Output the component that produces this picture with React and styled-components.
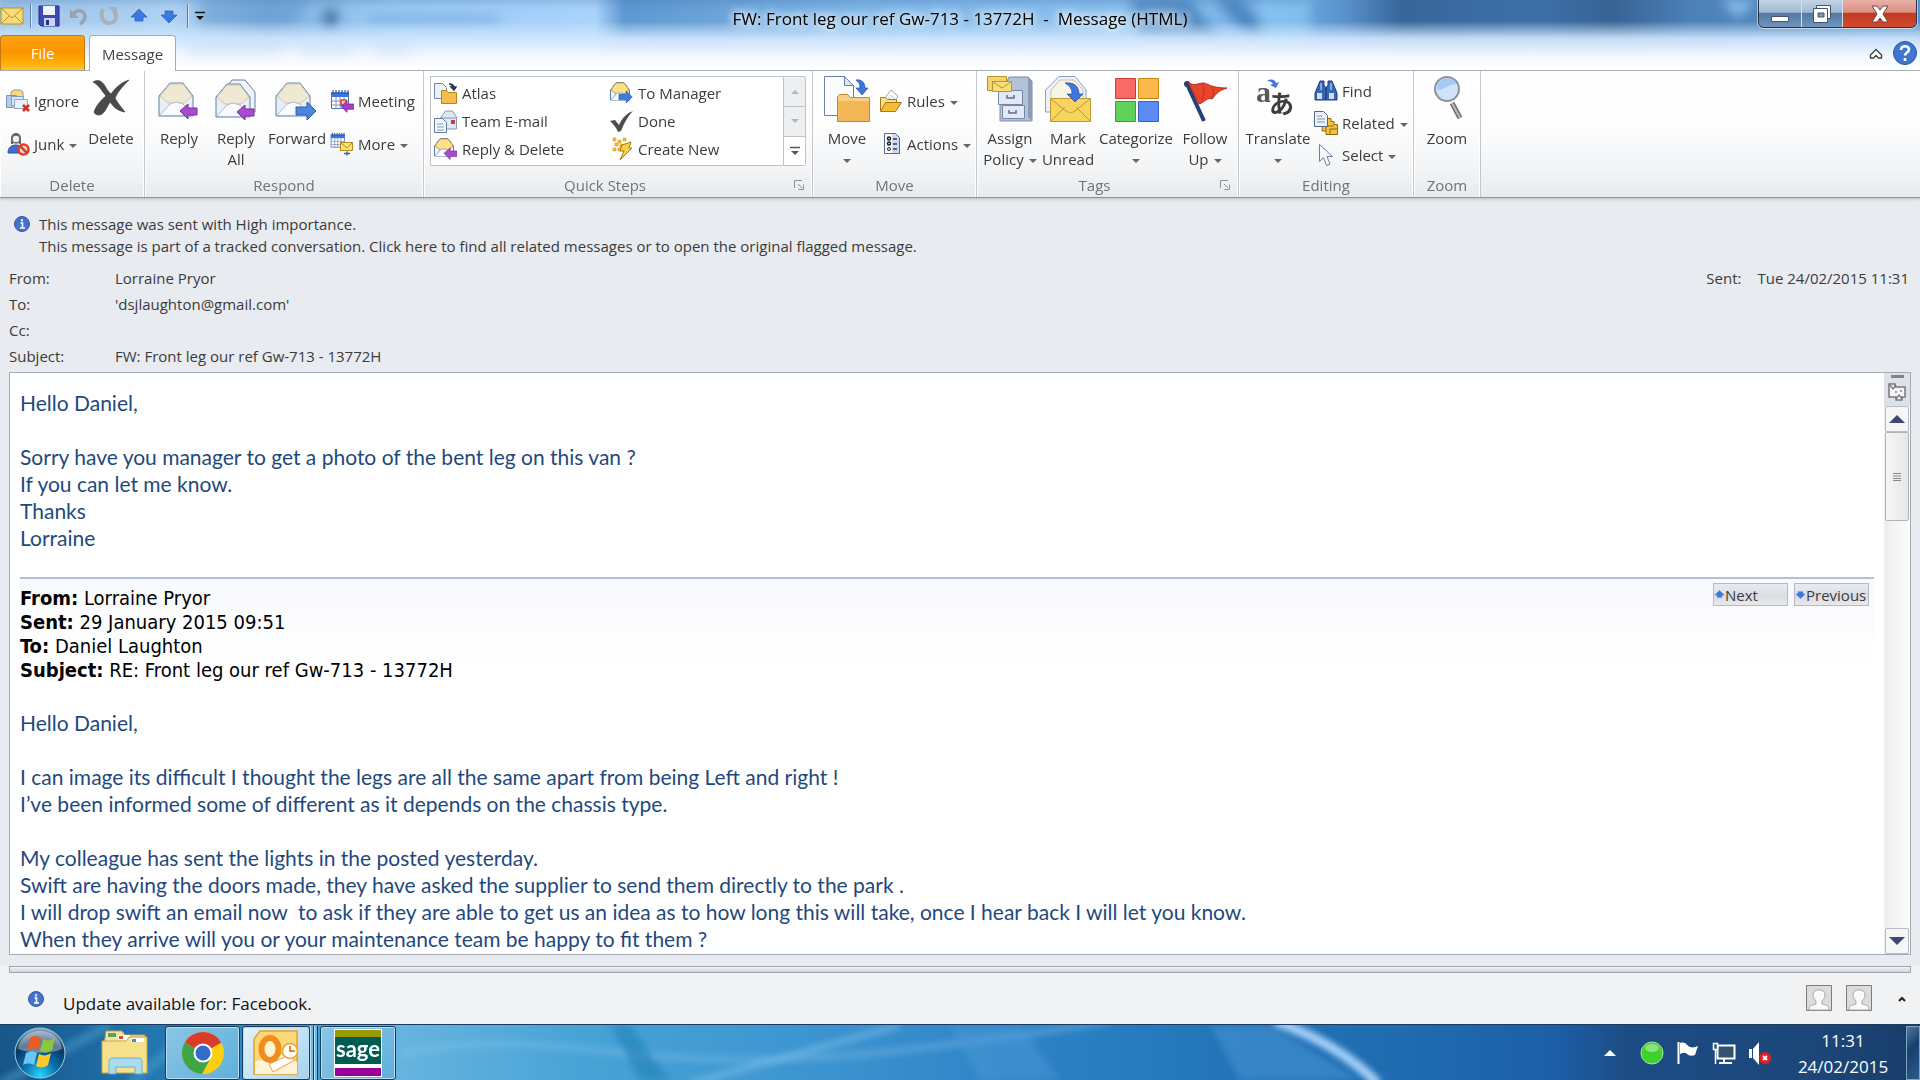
import React from "react";
import styled, { createGlobalStyle } from "styled-components";

const GlobalStyle = createGlobalStyle`
  *, *::before, *::after { box-sizing: border-box; }
  html, body { margin: 0; padding: 0; }
  body {
    font-family: "Open Sans", "Noto Sans", sans-serif;
    font-size: 15px;
    color: #3b3b3b;
    background: #e8ebf0;
  }
  button { font: inherit; color: inherit; border: 0; padding: 0; background: none; cursor: default; }
  svg { display: block; flex: none; }
  p, dl, dd, h1, h2 { margin: 0; font-weight: 400; }
`;

/* ---------- window frame ---------- */

const Window = styled.div`
  display: flex;
  flex-direction: column;
  height: 100vh;
  min-height: 900px;
  overflow: hidden;
`;

const Glass = styled.header`
  position: relative;
  isolation: isolate;
  flex: none;
  border-bottom: 1px solid #a7acb3;
`;

const GlassArt = styled.svg`
  position: absolute;
  inset: 0;
  width: 100%;
  height: 100%;
  z-index: -1;
`;

const TitleBar = styled.div`
  display: grid;
  grid-template-columns: 1fr auto 1fr;
  align-items: start;
  height: 35px;
`;

const QuickAccess = styled.div`
  display: flex;
  align-items: center;
  gap: 6px;
  height: 31px;
`;

const QuickButton = styled.button`
  display: grid;
  place-items: center;
  width: ${(p) => (p.$slim ? 12 : 24)}px;
  height: 26px;
`;

const QuickDivider = styled.span`
  width: 1px;
  height: 24px;
  background: #5c7ba3;
  box-shadow: 1px 0 #d8e8fa;
`;

const Caption = styled.h1`
  font-size: 17px;
  line-height: 38px;
  color: #000;
  white-space: nowrap;
  padding: 0 12px;
  text-shadow: 0 0 8px #fff, 0 0 8px #fff, 0 0 14px #e8f4ff;
`;

const CaptionButtons = styled.div`
  justify-self: end;
  display: flex;
  height: 28px;
  margin-right: 3px;
  border: 1px solid #25364c;
  border-top: 0;
  border-radius: 0 0 6px 6px;
  box-shadow: 0 0 0 1px #ffffff80;
  overflow: hidden;
`;

const CaptionButton = styled.button`
  display: grid;
  place-items: center;
  width: ${(p) => (p.$close ? 73 : p.$narrow ? 41 : 43)}px;
  border-right: 1px solid #cfe0f3;
  background: ${(p) =>
    p.$close
      ? "linear-gradient(#e9b0a6 0, #dd8f84 45%, #c33a22 50%, #d2492f 100%)"
      : "linear-gradient(#c3d3e5 0, #a3bad3 45%, #54789f 50%, #6f95bf 100%)"};
  &:last-child { border-right: 0; }
`;

const TabStrip = styled.nav`
  display: flex;
  align-items: flex-end;
  height: 35px;
`;

const Tab = styled.button`
  width: ${(p) => (p.$file ? 85 : 87)}px;
  height: ${(p) => (p.$file ? 35 : 36)}px;
  margin: ${(p) => (p.$file ? "0 4px 0 0" : "0 0 -1px")};
  border: 1px solid ${(p) => (p.$file ? "#c9780d" : "#a7acb3")};
  border-bottom: 0;
  border-radius: 4px 4px 0 0;
  color: ${(p) => (p.$file ? "#fff" : "#444")};
  background: ${(p) =>
    p.$file ? "linear-gradient(#f9a413, #fb9400 45%, #ffa600 70%, #ffc425)" : "#fff"};
`;

const StripTools = styled.div`
  display: flex;
  align-items: center;
  gap: 10px;
  height: 35px;
  margin-left: auto;
  padding-right: 3px;
`;

/* ---------- ribbon ---------- */

const Ribbon = styled.section`
  display: flex;
  flex: none;
  height: 127px;
  background: linear-gradient(#fff 0, #fdfdfe 45%, #f2f4f5 78%, #e8ebee 100%);
  border-bottom: 1px solid #8c9298;
  box-shadow: 0 2px 2px #c9cdd2;
  position: relative;
`;

const GroupBox = styled.div`
  display: flex;
  flex-direction: column;
  border-right: 1px solid #c3c7cb;
  box-shadow: inset -1px 0 #fff, inset 1px 0 #fff;
  padding-left: ${(p) => p.$inset}px;
  width: ${(p) => p.$width}px;
`;

const GroupBody = styled.div`
  display: flex;
  flex: 1;
`;

const GroupFooter = styled.div`
  display: flex;
  align-items: center;
  height: 24px;
  margin-left: -${(p) => p.$inset}px;
  padding-right: 8px;
  color: #6e747c;
  line-height: 22px;
  span {
    flex: 1;
    text-align: center;
    padding: ${(p) => (p.$launcher ? "0 8px 0 0" : "0 0 0 8px")};
  }
`;

const BigButton = styled.button`
  display: flex;
  flex-direction: column;
  align-items: center;
  gap: 6px;
  width: ${(p) => p.$width}px;
  padding-top: 5px;
  line-height: 21px;
  white-space: nowrap;
`;

const SmallColumn = styled.div`
  display: flex;
  flex-direction: column;
  gap: ${(p) => (p.$dense ? 8 : 19)}px;
  width: ${(p) => p.$width}px;
  padding: ${(p) => (p.$dense ? 8 : 18)}px 0 0 1px;
`;

const SmallButton = styled.button`
  display: flex;
  align-items: center;
  gap: 4px;
  height: 24px;
  white-space: nowrap;
`;

const CaretShape = styled.span`
  display: inline-block;
  width: 0;
  height: 0;
  margin-left: ${(p) => (p.$alone ? 0 : 5)}px;
  vertical-align: middle;
  border: 4px solid transparent;
  border-top-color: #666;
  border-bottom: 0;
`;

const Gallery = styled.div`
  display: flex;
  width: 376px;
  height: 90px;
  margin-top: 5px;
`;

const GalleryList = styled.div`
  flex: 1;
  display: grid;
  grid-template-columns: 176px 1fr;
  grid-auto-rows: 28px;
  padding: 2px 0 0 2px;
  border: 1px solid #c0c4c8;
  background: #fff;
`;

const GalleryItem = styled.button`
  display: flex;
  align-items: center;
  gap: 5px;
  white-space: nowrap;
`;

const GalleryScroll = styled.div`
  display: grid;
  grid-template-rows: 1fr 1fr 1fr;
  width: 22px;
  border: 1px solid #c0c4c8;
  border-left: 0;
  border-radius: 0 3px 3px 0;
  background: #eeeff0;
  button { display: grid; place-items: center; }
  button + button { border-top: 1px solid #c0c4c8; }
  button:last-child { background: #fff; }
`;

const RibbonGroup = ({ label, width, inset, launcher, children }) => (
  <GroupBox $width={width} $inset={inset}>
    <GroupBody>{children}</GroupBody>
    <GroupFooter $inset={inset} $launcher={launcher}>
      <span>{label}</span>
      {launcher && (
        <button aria-label={`${label} options`}>
          <svg width="10" height="10" viewBox="0 0 10 10" fill="none" stroke="#8b9199">
            <path d="M.5 8V.5H8M4 4l4 4M9.5 4.500V9.500H4.500" />
          </svg>
        </button>
      )}
    </GroupFooter>
  </GroupBox>
);

const Big = ({ icon, lines, caret, width }) => (
  <BigButton $width={width}>
    {icon}
    <span>
      {lines[0]}
      <br />
      {lines[1]}
      {caret && <CaretShape $alone={!lines[1]} />}
    </span>
  </BigButton>
);

const Small = ({ icon, children, caret }) => (
  <SmallButton>
    {icon}
    <span>
      {children}
      {caret && <CaretShape />}
    </span>
  </SmallButton>
);

/* ---------- icons ---------- */

const Ic = ({ s = 24, h, children, ...rest }) => (
  <svg width={s} height={h || s} viewBox={`0 0 ${s} ${h || s}`} aria-hidden="true" fill="none" {...rest}>
    {children}
  </svg>
);

const leftArrow = "M0 7l8-7v4h9v7H8v4z";
const rightArrow = "M20 9l-9-9v5H0v8h11v5z";

const OpenLetter = ({ back }) => (
  <g stroke="#5f7fa8" strokeLinejoin="round">
    {back && <path d="M11 12L20 1h13l10 12v20H12z" fill="#f0f3f8" />}
    <path d="M4 18L15 5h13l10 13v20H4z" fill="#e9eff8" />
    <path d="M5 18L15 6h13l9 12-8 7H13z" fill="#efe9d4" stroke="#cdc5a8" />
    <path d="M5 37l10-11 6-2 7 2 9 11" fill="#f8fafd" stroke="#a9bbd4" />
  </g>
);

const ReplyIcon = ({ all }) => (
  <Ic s={46}>
    <g transform={all ? "translate(-1 3)" : "translate(-1 2)"}>
      <OpenLetter back={all} />
      <path d={leftArrow} transform="translate(25 26)" fill="#a94bd0" stroke="#7d2ba4" />
    </g>
  </Ic>
);

const ForwardIcon = () => (
  <Ic s={46}>
    <g transform="translate(-2 2)">
      <OpenLetter />
      <path d={rightArrow} transform="translate(24 24)" fill="#4a86dc" stroke="#2a5cab" />
    </g>
  </Ic>
);

const DeleteIcon = () => (
  <Ic s={46}>
    <path d="M5 6c5-3 9-1 12 4 2 4 4 6 6 8C28 11 34 6 41 4c-6 6-11 11-14 18 3 6 7 10 10 14-8-1-12-6-15-10-3 5-5 10-8 12-3 2-7 1-8-2C8 30 13 24 18 20 14 15 11 9 5 6z" fill="#4a4a4a" stroke="#2f2f2f" strokeWidth=".6" />
  </Ic>
);

const IgnoreIcon = () => (
  <Ic>
    <path d="M5 3l3-2h6l3 2v6H5z" fill="#ffd96b" stroke="#7f9cc2" />
    <path d="M.5 6.500h10v12H.5z" fill="#b7cbe6" stroke="#7695c0" />
    <path d="M5.500 7.500h12v9h-12z" fill="#dbe6f4" stroke="#7f9cc2" />
    <path d="M8.500 10.500h13v9h-13z" fill="#e9eff8" stroke="#92a9c9" />
    <path d="M17 16l6 6m0-6l-6 6" stroke="#d62e1c" strokeWidth="2.600" />
  </Ic>
);

const JunkIcon = () => (
  <Ic>
    <path d="M2 21c0-6 4-8 8-8s7 3 7 8z" fill="#3d6fd0" stroke="#2a529e" />
    <path d="M6 12V6a4 4 0 018 0v6" fill="#e6e6e6" stroke="#606468" strokeWidth="2" />
    <circle cx="10" cy="7" r="4" fill="#f1f1f1" stroke="#606468" strokeWidth="1.500" />
    <circle cx="17.500" cy="17.500" r="5" fill="#f6d5cc" stroke="#d8432a" strokeWidth="2.500" />
    <path d="M14 14l7 7" stroke="#d8432a" strokeWidth="2.500" />
  </Ic>
);

const CalendarBase = () => (
  <g>
    <path d="M1.500 3.500h17v16h-17z" fill="#fff" stroke="#4b6fae" />
    <path d="M1 3h18v5H1z" fill="#3f74d8" />
    <path d="M3 1v4M6 1v4M9 1v4M12 1v4M15 1v4M18 1v4" stroke="#24355a" strokeDasharray="2 1" />
    <path d="M2 12h16M2 16h16M6 8v12M10 8v12M14 8v12" stroke="#7d96c0" />
  </g>
);

const MeetingIcon = () => (
  <Ic>
    <CalendarBase />
    <path d="M11 11h5v5h-5z" fill="#fbd3c8" stroke="#e0401f" strokeWidth="1.500" />
    <path d={leftArrow} transform="translate(11 12) scale(.75)" fill="#a43cc8" stroke="#75249a" />
  </Ic>
);

const MoreIcon = () => (
  <Ic>
    <g transform="scale(.78)"><CalendarBase /></g>
    <path d="M10.500 10.500h12v8h-12z" fill="#ffdf72" stroke="#b38a1e" />
    <path d="M11 11l6 5 5-5" stroke="#b38a1e" />
    <path d="M14 21.500h6m-3-2v4" stroke="#3c63a9" strokeWidth="1.500" />
  </Ic>
);

const AtlasIcon = () => (
  <Ic>
    <path d="M1.500 2.500h8l4 4v11h-12z" fill="#eef3fa" stroke="#6e84a8" />
    <path d="M8.500 12v10.500h15V11.500h-8l-2-2h-5z" fill="#f6be4b" stroke="#b8841f" />
    <path d="M16 3c4 0 5 2 5 4m-3-1l3 3 2-3z" stroke="#26344f" strokeWidth="1.500" fill="#26344f" />
  </Ic>
);

const TeamIcon = () => (
  <Ic>
    <path d="M7.500 9l5-7h7l4 6v12h-16z" fill="#dfe8f5" stroke="#8298bd" />
    <path d="M8 9h15" stroke="#8298bd" />
    <path d="M1.500 9.500h8l4 4v10h-12z" fill="#f4f8fd" stroke="#5f7aa5" />
    <path d="M4 15h6M4 18h7M4 21h7" stroke="#7e95b9" />
    <path d="M18 11h4v4h-4z" fill="#d03a3a" />
  </Ic>
);

const MiniLetter = () => (
  <g>
    <path d="M1.500 9L7 1.500h8L20.500 9v10h-19z" fill="#eaf2fc" stroke="#5580bd" />
    <path d="M2 9l5-7h8l5 7-5 4H7z" fill="#ffe08a" stroke="#c79f38" />
    <path d="M2 19l6-7h5l7 7" stroke="#88a7d2" fill="#fff" />
  </g>
);

const ReplyDeleteIcon = () => (
  <Ic>
    <MiniLetter />
    <path d={leftArrow} transform="translate(11 11) scale(.76)" fill="#a94bd0" stroke="#7d2ba4" />
  </Ic>
);

const ToManagerIcon = () => (
  <Ic>
    <MiniLetter />
    <path d={rightArrow} transform="translate(10 10) scale(.66)" fill="#3f7be0" stroke="#214fa3" />
  </Ic>
);

const DoneIcon = () => (
  <Ic>
    <path d="M1 12l5-1 4 5C13 9 18 4 24 2c-5 5-9 12-12 20l-3 1C7 18 4 15 1 12z" fill="#4d4d4d" />
  </Ic>
);

const CreateNewIcon = () => (
  <Ic>
    <path d="M4 1h3v3H4zM9 3h3v3H9zM14 1h3v3h-3zM6 6h3v3H6zM11 7h3v3h-3zM4 11h3v3H4zM9 11h3v3H9z" fill="#efc02f" stroke="#d39c17" strokeWidth=".6" />
    <path d="M13 8l9-3-2 6h3L11 23l4-9h-4z" fill="#f6d14a" stroke="#a77a12" />
  </Ic>
);

const MoveIcon = () => (
  <Ic s={46}>
    <path d="M.5.5h20l9 9v30H.5z" fill="#fbfcfe" stroke="#6980a8" />
    <path d="M20.500.5v9h9z" fill="#dbe5f3" stroke="#6980a8" />
    <path d="M13.500 21l2-2.500h8l3 3h19v24h-32z" fill="#f9cf85" stroke="#c4872a" />
    <path d="M14 25h31v20H14z" fill="#f3b755" />
    <path d="M32 4c6-1 9 3 9 8h3l-6 7-6-7h4c0-4-1-6-4-8z" fill="#3f75dc" stroke="#25509f" strokeWidth=".7" />
  </Ic>
);

const RulesIcon = () => (
  <Ic>
    <path d="M6 9l6-8 7 6-4 9z" fill="#fff" stroke="#9aa4b5" />
    <path d="M9 8l5 4M11 6l5 4" stroke="#b6bfcc" />
    <path d="M1.500 22V8.500h5l2 2h9V14" fill="#fde08d" stroke="#a67a14" />
    <path d="M1.500 22.500l5-9h16l-6 9z" fill="#f9bb33" stroke="#a67a14" />
  </Ic>
);

const ActionsIcon = () => (
  <Ic>
    <path d="M5.500 1.500h11l4 4v16h-15z" fill="#cfdcee" stroke="#54688c" />
    <path d="M6 2h7v19H6z" fill="#fff" />
    <circle cx="10" cy="6.500" r="1.500" stroke="#222" strokeWidth="1.500" />
    <circle cx="10" cy="11.500" r="1.500" stroke="#222" strokeWidth="1.500" />
    <circle cx="10" cy="17" r="1.500" stroke="#222" />
    <path d="M14 7h4M14 12h4M14 17h4" stroke="#51668f" strokeWidth="2" />
  </Ic>
);

const PolicyIcon = () => (
  <Ic s={46}>
    <path d="M22 1h19l4 4v40H13V20z" fill="#b4c2d8" stroke="#7c8ca8" />
    <path d="M41 1v40l4 4V5z" fill="#8d9cb6" />
    <path d="M11.500 14.500h24v14h-24zM15.500 29.500h22v13h-22z" fill="#e3e9f3" stroke="#7387a8" />
    <path d="M20 19v3h7v-3M22 34v3h7v-3" stroke="#5b6f92" strokeWidth="1.500" />
    <path d="M.5.500h19v14H.500z" fill="#f4d56a" stroke="#b8952c" />
    <path d="M5.500 5.500h19v10h-19z" fill="#f8dd7a" stroke="#b8952c" />
    <path d="M6 6l9 6 9-6" stroke="#b8952c" />
  </Ic>
);

const UnreadIcon = () => (
  <Ic s={46}>
    <path d="M.500 14L14 .500h16L41 14v22H.500z" fill="#edf2f9" stroke="#8b9fbd" />
    <path d="M6 14L15 4h14l9 10v10H6z" fill="#f7f4e8" stroke="#c9c4ae" />
    <path d="M5.500 22.500h40v23h-40z" fill="#f7d35f" stroke="#bd9a33" />
    <path d="M6 45l14-14M45 45L31 31M6 23l15 12c3 2 6 2 9 0l15-12" stroke="#bd9a33" />
    <path d="M20 7c10-1 14 4 14 11h4l-8 8-8-8h5c0-5-2-8-7-11z" fill="#3f75dc" stroke="#25509f" strokeWidth=".7" />
  </Ic>
);

const CategorizeIcon = () => (
  <Ic s={46}>
    <path d="M2.500 2.500h20v20h-20z" fill="#f86a66" stroke="#c93a37" />
    <path d="M25.500 2.500h20v20h-20z" fill="#fbb748" stroke="#cd8614" />
    <path d="M2.500 25.500h20v20h-20z" fill="#5fd257" stroke="#38a331" />
    <path d="M25.500 25.500h20v20h-20z" fill="#5d8bf6" stroke="#345fc4" />
  </Ic>
);

const FlagIcon = () => (
  <Ic s={46}>
    <path d="M5 8l17 37" stroke="#27407a" strokeWidth="4" />
    <circle cx="5" cy="8" r="3" fill="#27407a" />
    <path d="M6 6c6 5 10 1 15 1 5 0 7 5 24 5-9 3-10 5-15 11-5-2-7 3-13 5z" fill="#e8452c" stroke="#b42b17" />
    <path d="M20 8c3 4 2 10 0 16M30 11c2 4 2 7 0 11" stroke="#c23018" />
  </Ic>
);

const TranslateIcon = () => (
  <Ic s={46}>
    <text x="1" y="26" fontFamily="Liberation Serif, serif" fontWeight="700" fontSize="30" fill="#5a5a5a">a</text>
    <text x="14" y="37" fontFamily="Noto Sans CJK JP, sans-serif" fontWeight="700" fontSize="25" fill="#3e3e3e">あ</text>
    <path d="M12 5c5-3 8-1 9 2l3-1-3 6-6-3 3-1c-1-2-3-3-6-3z" fill="#3f75dc" />
  </Ic>
);

const FindIcon = () => (
  <Ic>
    <path d="M6 2h4v4l2 3v12H1v-7zM18 2h-4v4l-2 3v12h11v-7z" fill="#3866b4" stroke="#1f3f7c" />
    <path d="M3 14h5v6H3zM15 14h5v6h-5z" fill="#cfdff5" />
    <path d="M7 4v7M17 4v7" stroke="#9ebbe8" strokeWidth="1.500" />
  </Ic>
);

const RelatedIcon = () => (
  <Ic>
    <path d="M9 7.500h8v3h3v3h3.500v10H12V20H8z" fill="#f4c042" stroke="#8f6a0f" />
    <path d="M12 20v-5h8M16 23v-5h7" stroke="#8f6a0f" />
    <path d="M.500.500h9l4 4v11H.500z" fill="#edf2fa" stroke="#4d6793" />
    <path d="M3 5h5M3 8h8M3 11h8" stroke="#7f93b8" />
  </Ic>
);

const SelectIcon = () => (
  <Ic>
    <path d="M5.500 1.500v17l4-4 3 8 3.500-1.500-3-7.500h5.500z" fill="#f4f8fe" stroke="#6c7f9e" />
  </Ic>
);

const ZoomIcon = () => (
  <Ic s={46}>
    <path d="M28 27l8 15" stroke="#6f6f6f" strokeWidth="5" />
    <path d="M28 27l8 15" stroke="#b9b9b9" strokeWidth="2" />
    <circle cx="23" cy="13" r="12" fill="#cfe2f8" stroke="#8e9399" strokeWidth="2" />
    <path d="M13 12a10 10 0 0119-4c-8 0-11 6-18 6z" fill="#a4c9f3" />
  </Ic>
);

const InfoIcon = () => (
  <Ic s={16}>
    <circle cx="8" cy="8" r="7.500" fill="#4272c9" stroke="#2f58a5" />
    <path d="M8 3v2.500M6.500 7H8.500v5M6 12h5" stroke="#fff" strokeWidth="1.600" />
  </Ic>
);

const BlueArrow = ({ down, s = 16 }) => (
  <svg width={s} height={s} viewBox="0 0 16 16" aria-hidden="true">
    <path
      d="M8 1l8 8h-4v4H4V9H0z"
      transform={down ? "rotate(180 8 8)" : undefined}
      fill="#3d78e0"
      stroke="#2a5bbd"
      strokeWidth=".7"
    />
  </svg>
);

/* ---------- message ---------- */

const MessageArea = styled.main`
  display: flex;
  flex-direction: column;
  flex: 1;
  min-height: 0;
  padding: 15px 9px 11px;
`;

const InfoBar = styled.div`
  display: flex;
  gap: 9px;
  padding: 0 0 8px 5px;
  line-height: 22px;
  svg { margin-top: 3px; }
`;

const Fields = styled.dl`
  display: grid;
  grid-template-columns: 106px 1fr auto;
  grid-auto-rows: 26px;
  line-height: 26px;
  padding-bottom: 3px;
`;

const SentField = styled.div`
  display: flex;
  gap: 16px;
  padding-right: 2px;
`;

const Pane = styled.div`
  display: flex;
  flex: 1;
  min-height: 0;
  border: 1px solid #a5abb4;
  background: #fff;
`;

const Letter = styled.article`
  flex: 1;
  min-width: 0;
  overflow: hidden;
  padding: 16px 10px 0 10px;
  font-family: Lato, "Open Sans", sans-serif;
  font-size: 21px;
  line-height: 27px;
  color: #1f497d;
  p + p { margin-top: 27px; }
`;

const Quoted = styled.section`
  margin-top: 26px;
  border-top: 2px solid #b5c0d8;
  background: linear-gradient(#f8f9fc, #fff 90px);
`;

const QuotedTop = styled.div`
  display: flex;
  justify-content: space-between;
  margin-bottom: 27px;
`;

const QuotedHeaders = styled.div`
  padding-top: 7px;
  font-family: "DejaVu Sans Condensed", "DejaVu Sans", sans-serif;
  font-size: 20px;
  line-height: 24px;
  color: #000;
`;

const Jumps = styled.div`
  display: flex;
  gap: 6px;
  padding: 4px 5px 0 0;
`;

const JumpButton = styled.button`
  display: flex;
  align-items: center;
  gap: 1px;
  width: 75px;
  height: 23px;
  padding-left: 1px;
  border: 1px solid #b3b9c5;
  background: linear-gradient(#e6ebf3, #dadde3 60%, #e8e9ec);
  font-family: "Open Sans", "Noto Sans", sans-serif;
  font-size: 15px;
  line-height: 20px;
  color: #3b3b3b;
`;

const ScrollBar = styled.div`
  display: flex;
  flex-direction: column;
  width: 26px;
  padding: 0 1px 0 1px;
  background: linear-gradient(90deg, #eeeeef, #fcfcfc);
`;

const ScrollTools = styled.div`
  display: flex;
  flex-direction: column;
  align-items: center;
  gap: 5px;
  height: 33px;
  margin: 0 -1px;
  padding-top: 2px;
  background: #dde2ea;
`;

const ScrollButton = styled.button`
  display: grid;
  place-items: center;
  height: 26px;
  border: 1px solid #b8bcc4;
  border-radius: 2px;
  background: #f6f6f7;
`;

const ScrollThumb = styled.div`
  display: grid;
  place-items: center;
  height: 89px;
  margin-bottom: auto;
  border: 1px solid #b0b4b8;
  border-radius: 2px;
  background: linear-gradient(90deg, #f6f6f6, #e6e6e7);
`;

const PeoplePane = styled.footer`
  flex: none;
  background: #f1f2f4;
  padding: 0 9px;
`;

const Splitter = styled.div`
  height: 7px;
  border: 1px solid #9fa5ad;
  background: linear-gradient(#f1f4f7, #cfd6de);
`;

const PeopleRow = styled.div`
  display: flex;
  align-items: center;
  height: 51px;
  padding: 0 5px 0 19px;
  font-size: 17px;
  color: #111;
`;

const UpdateNote = styled.p`
  display: flex;
  align-items: center;
  gap: 19px;
  margin-right: auto;
  padding-top: 10px;
  svg { margin-bottom: 10px; }
`;

const Avatars = styled.div`
  display: flex;
  gap: 14px;
  padding: 0 26px 1px 0;
`;

/* ---------- taskbar ---------- */

const Taskbar = styled.footer`
  position: relative;
  isolation: isolate;
  display: flex;
  flex: none;
  height: 56px;
  border-top: 1px solid #1b3a5c;
  box-shadow: inset 0 1px #9cc4e2;
  color: #fff;
`;

const TaskArt = styled.svg`
  position: absolute;
  inset: 0;
  width: 100%;
  height: 100%;
  z-index: -1;
`;

const Pinned = styled.div`
  display: flex;
  gap: 18px;
  padding-left: 14px;
`;

const TaskButton = styled.button`
  display: grid;
  place-items: center;
  width: ${(p) => p.$width}px;
  height: 54px;
  margin-top: 1px;
  border-radius: 3px;
  ${(p) =>
    p.$open &&
    `
    border: 1px solid #0f4066;
    box-shadow: inset 0 0 0 1px #b9def3;
    background: linear-gradient(135deg, ${p.$active ? "#e4f3fb, #a5d3ec" : "#8cc5e4, #5db0dc"});
  `}
`;

const TaskStack = styled.div`
  display: flex;
  padding-right: 2px;
`;

const StackEdge = styled.span`
  width: 4px;
  height: 54px;
  margin-top: 1px;
  border-right: 1px solid #0f4066;
  border-left: 1px solid #b9def3;
  background: #6fb8de;
`;

const Tray = styled.div`
  display: flex;
  align-items: center;
  margin-left: auto;
`;

const TrayIcons = styled.div`
  display: flex;
  align-items: center;
  gap: 12px;
  padding-right: 22px;
`;

const Clock = styled.time`
  width: 98px;
  margin-right: 14px;
  padding-top: 2px;
  font-size: 17px;
  line-height: 26px;
  text-align: center;
`;

const ShowDesktop = styled.button`
  align-self: stretch;
  width: 14px;
  margin-top: 1px;
  border: 1px solid #7fa3c4;
  background: linear-gradient(135deg, #4f7ba5, #183f6c 40%, #2c5a8b);
`;

const Avatar = () => (
  <svg width="26" height="26" viewBox="0 0 26 26" aria-hidden="true">
    <path d="M.5.5h25v25H.5z" fill="#dcdcdc" stroke="#7c7c7c" />
    <path d="M3 25c0-4 2-5 7-6v-3c-2-2-3-4-3-6 0-7 12-7 12 0 0 2-1 4-3 6v3c5 1 7 2 7 6z" fill="#fafafa" stroke="#a8a8a8" />
  </svg>
);

export default function App() {
  return (
    <Window>
      <GlobalStyle />
      <Glass>
        <GlassArt viewBox="0 0 1920 70" preserveAspectRatio="none" aria-hidden="true">
          <defs>
            <linearGradient id="sky" x2="1" y2="0">
              <stop stopColor="#9dc4e8" /><stop offset=".09" stopColor="#b0d3f4" /><stop offset=".14" stopColor="#7fb0de" />
              <stop offset=".2" stopColor="#9ccaf5" /><stop offset=".31" stopColor="#a9d3fb" /><stop offset=".325" stopColor="#5f98d0" />
              <stop offset=".45" stopColor="#7fb6e8" /><stop offset=".6" stopColor="#8bbfee" /><stop offset=".66" stopColor="#79b3e6" />
              <stop offset=".7" stopColor="#5a92cc" /><stop offset=".73" stopColor="#37669a" /><stop offset=".8" stopColor="#3d70a8" />
              <stop offset=".84" stopColor="#376394" /><stop offset=".88" stopColor="#4c80b8" /><stop offset="1" stopColor="#5b92c8" />
            </linearGradient>
            <linearGradient id="fade" x2="0" y2="1">
              <stop offset=".3" stopColor="#d6ebff" stopOpacity="0" /><stop offset=".55" stopColor="#cfe6fd" stopOpacity=".92" />
              <stop offset=".8" stopColor="#f2f8ff" /><stop offset="1" stopColor="#fff" />
            </linearGradient>
            <filter id="soft" x="-20%" y="-50%" width="140%" height="200%"><feGaussianBlur stdDeviation="6" /></filter>
          </defs>
          <path d="M0 0h1920v70H0z" fill="url(#sky)" />
          <g filter="url(#soft)">
            <path d="M200 0h110l-15 26H200z" fill="#5e96cc" opacity=".5" />
            <path d="M0-10h1300v10H0z" fill="#2f6aa8" opacity=".5" />
            <path d="M322 10h18l-6 20h-8z" fill="#33648f" opacity=".8" />
            <path d="M370 14h130v10H370z" fill="#5e98d0" opacity=".45" />
            <path d="M1130 0h60l30 40h-80zM1215 0h25l40 40h-30z" fill="#3d78b4" opacity=".75" />
            <path d="M1260 0h50v40h-50z" fill="#8fccf6" opacity=".6" />
            <path d="M1720 0h36l-18 18z" fill="#8fc0f0" />
          </g>
          <path d="M0 0h1920v70H0z" fill="url(#fade)" />
          <path d="M190 45h90v12h-90zM300 47h50v10h-50zM375 47h35v10h-35z" fill="#9fb6cc" opacity=".16" filter="url(#soft)" />
        </GlassArt>
        <TitleBar>
          <QuickAccess>
            <QuickButton aria-label="Message">
              <Ic s={24}><path d="M1 4h22v16H1z" fill="#f9dc7a" stroke="#b98d25" /><path d="M1 4l11 10L23 4M1 20l8-8M23 20l-8-8" stroke="#b98d25" /></Ic>
            </QuickButton>
            <QuickDivider />
            <QuickButton aria-label="Save">
              <Ic s={22}><path d="M1 1h20v20H3l-2-2z" fill="#3b49b8" stroke="#252f86" /><path d="M5 1h12v9H5z" fill="#eef2fb" /><path d="M6 13h11v8H6z" fill="#cdd5ea" /><path d="M8 15h3v5H8z" fill="#252f86" /></Ic>
            </QuickButton>
            <QuickButton aria-label="Undo">
              <Ic s={22}><path d="M5 9c4-5 11-4 12 2 0 4-2 6-5 8" stroke="#9aa2ae" strokeWidth="3.500" /><path d="M2 4v9h9z" fill="#9aa2ae" /></Ic>
            </QuickButton>
            <QuickButton aria-label="Redo">
              <Ic s={22}><path d="M5 4C2 10 4 18 11 18s9-7 5-12" stroke="#a9b0ba" strokeWidth="4" /><path d="M10 2h9v9z" fill="#a9b0ba" /></Ic>
            </QuickButton>
            <QuickButton aria-label="Previous item"><BlueArrow /></QuickButton>
            <QuickButton aria-label="Next item"><BlueArrow down /></QuickButton>
            <QuickDivider />
            <QuickButton $slim aria-label="Customize toolbar">
              <Ic s={10}><path d="M0 1.500h10" stroke="#111" strokeWidth="1.500" /><path d="M1 5h8L5 9z" fill="#111" /></Ic>
            </QuickButton>
          </QuickAccess>
          <Caption>FW: Front leg our ref Gw-713 - 13772H&nbsp; -&nbsp; Message (HTML)</Caption>
          <CaptionButtons>
            <CaptionButton aria-label="Minimize">
              <Ic s={20}><path d="M1.500 12.500h17v5h-17z" fill="#fff" stroke="#44546a" /></Ic>
            </CaptionButton>
            <CaptionButton $narrow aria-label="Restore">
              <Ic s={20}><path d="M4.500 1.500h14v13h-14z" fill="#fff" stroke="#44546a" /><path d="M1.500 4.500h14v14h-14z" fill="#fff" stroke="#44546a" /><path d="M6 9h6v4H6z" fill="#7f97b3" stroke="#44546a" /></Ic>
            </CaptionButton>
            <CaptionButton $close aria-label="Close">
              <Ic s={20}><path d="M2 2h5l3 4 3-4h5l-5 8 5 8h-5l-3-4-3 4H2l5-8z" fill="#fff" stroke="#6a4240" /></Ic>
            </CaptionButton>
          </CaptionButtons>
        </TitleBar>
        <TabStrip>
          <Tab $file>File</Tab>
          <Tab>Message</Tab>
          <StripTools>
            <button aria-label="Minimize ribbon">
              <Ic s={14}><path d="M1.500 9L7 3.500 12.500 9v3h-3L7 9.500 4.500 12h-3z" fill="#fff" stroke="#444" strokeWidth="1.400" /></Ic>
            </button>
            <button aria-label="Help">
              <Ic s={24}><circle cx="12" cy="12" r="11.500" fill="#3f76cf" stroke="#2a57a3" /><path d="M8 9c0-5 8-5 8-.5 0 3-4 3-4 6M12 17v3" stroke="#fff" strokeWidth="2.600" /></Ic>
            </button>
          </StripTools>
        </TabStrip>
      </Glass>

      <Ribbon>
        <RibbonGroup label="Delete" width={145} inset={5}>
          <SmallColumn $width={80}>
            <Small icon={<IgnoreIcon />}>Ignore</Small>
            <Small icon={<JunkIcon />} caret>Junk</Small>
          </SmallColumn>
          <Big icon={<DeleteIcon />} lines={["Delete"]} width={52} />
        </RibbonGroup>
        <RibbonGroup label="Respond" width={279} inset={6}>
          <Big icon={<ReplyIcon />} lines={["Reply"]} width={56} />
          <Big icon={<ReplyIcon all />} lines={["Reply", "All"]} width={58} />
          <Big icon={<ForwardIcon />} lines={["Forward"]} width={64} />
          <SmallColumn $width={90}>
            <Small icon={<MeetingIcon />}>Meeting</Small>
            <Small icon={<MoreIcon />} caret>More</Small>
          </SmallColumn>
        </RibbonGroup>
        <RibbonGroup label="Quick Steps" width={389} inset={6} launcher>
          <Gallery>
            <GalleryList>
              <GalleryItem><AtlasIcon />Atlas</GalleryItem>
              <GalleryItem><ToManagerIcon />To Manager</GalleryItem>
              <GalleryItem><TeamIcon />Team E-mail</GalleryItem>
              <GalleryItem><DoneIcon />Done</GalleryItem>
              <GalleryItem><ReplyDeleteIcon />Reply &amp; Delete</GalleryItem>
              <GalleryItem><CreateNewIcon />Create New</GalleryItem>
            </GalleryList>
            <GalleryScroll>
              <button aria-label="Row up"><Ic s={8}><path d="M0 6l4-4 4 4z" fill="#b4b7ba" /></Ic></button>
              <button aria-label="Row down"><Ic s={8}><path d="M0 2l4 4 4-4z" fill="#b4b7ba" /></Ic></button>
              <button aria-label="More quick steps"><Ic s={10}><path d="M0 1.500h10" stroke="#555" strokeWidth="1.500" /><path d="M1 5h8L5 9z" fill="#555" /></Ic></button>
            </GalleryScroll>
          </Gallery>
        </RibbonGroup>
        <RibbonGroup label="Move" width={164} inset={3}>
          <Big icon={<MoveIcon />} lines={["Move"]} caret width={62} />
          <SmallColumn $width={98}>
            <Small icon={<RulesIcon />} caret>Rules</Small>
            <Small icon={<ActionsIcon />} caret>Actions</Small>
          </SmallColumn>
        </RibbonGroup>
        <RibbonGroup label="Tags" width={262} inset={4} launcher>
          <Big icon={<PolicyIcon />} lines={["Assign", "Policy"]} caret width={58} />
          <Big icon={<UnreadIcon />} lines={["Mark", "Unread"]} width={58} />
          <Big icon={<CategorizeIcon />} lines={["Categorize"]} caret width={78} />
          <Big icon={<FlagIcon />} lines={["Follow", "Up"]} caret width={60} />
        </RibbonGroup>
        <RibbonGroup label="Editing" width={175} inset={4}>
          <Big icon={<TranslateIcon />} lines={["Translate"]} caret width={70} />
          <SmallColumn $dense $width={98}>
            <Small icon={<FindIcon />}>Find</Small>
            <Small icon={<RelatedIcon />} caret>Related</Small>
            <Small icon={<SelectIcon />} caret>Select</Small>
          </SmallColumn>
        </RibbonGroup>
        <RibbonGroup label="Zoom" width={67} inset={0}>
          <Big icon={<ZoomIcon />} lines={["Zoom"]} width={66} />
        </RibbonGroup>
      </Ribbon>

      <MessageArea>
        <InfoBar>
          <InfoIcon />
          <div>
            <p>This message was sent with High importance.</p>
            <p>This message is part of a tracked conversation. Click here to find all related messages or to open the original flagged message.</p>
          </div>
        </InfoBar>
        <Fields>
          <dt>From:</dt>
          <dd>Lorraine Pryor</dd>
          <SentField><dt>Sent:</dt><dd>Tue 24/02/2015 11:31</dd></SentField>
          <dt>To:</dt>
          <dd>'dsjlaughton@gmail.com'</dd>
          <span />
          <dt>Cc:</dt>
          <dd />
          <span />
          <dt>Subject:</dt>
          <dd>FW: Front leg our ref Gw-713 - 13772H</dd>
        </Fields>
        <Pane>
          <Letter>
            <p>Hello Daniel,</p>
            <p>
              Sorry have you manager to get a photo of the bent leg on this van ?<br />
              If you can let me know.<br />
              Thanks<br />
              Lorraine
            </p>
            <Quoted>
              <QuotedTop>
                <QuotedHeaders>
                  <b>From:</b> Lorraine Pryor<br />
                  <b>Sent:</b> 29 January 2015 09:51<br />
                  <b>To:</b> Daniel Laughton<br />
                  <b>Subject:</b> RE: Front leg our ref Gw-713 - 13772H
                </QuotedHeaders>
                <Jumps>
                  <JumpButton><BlueArrow s={9} />Next</JumpButton>
                  <JumpButton><BlueArrow s={9} down />Previous</JumpButton>
                </Jumps>
              </QuotedTop>
              <p>Hello Daniel,</p>
              <p>
                I can image its difficult I thought the legs are all the same apart from being Left and right !<br />
                I’ve been informed some of different as it depends on the chassis type.
              </p>
              <p>
                My colleague has sent the lights in the posted yesterday.<br />
                Swift are having the doors made, they have asked the supplier to send them directly to the park .<br />
                I will drop swift an email now&nbsp; to ask if they are able to get us an idea as to how long this will take, once I hear back I will let you know.<br />
                When they arrive will you or your maintenance team be happy to fit them ?
              </p>
            </Quoted>
          </Letter>
          <ScrollBar>
            <ScrollTools>
              <Ic s={13} h={3}><path d="M0 0h13v3H0z" fill="#7d828b" /></Ic>
              <Ic s={18}><path d="M1 4V1h6v3h10v10h-3v3h-6v-3H1z" fill="#f6f3f6" stroke="#77777f" strokeWidth="1.500" /><path d="M2 2l3 4 3-4M8 16l3-4 3 4M8 8v2M13 7v2" stroke="#77777f" strokeWidth="1.300" /></Ic>
            </ScrollTools>
            <ScrollButton aria-label="Scroll up"><Ic s={16} h={8}><path d="M0 8l8-8 8 8z" fill="#3c4a72" /></Ic></ScrollButton>
            <ScrollThumb><Ic s={8}><path d="M0 .5h8M0 3h8M0 5.500h8M0 7.500h8" stroke="#8a8a8a" /></Ic></ScrollThumb>
            <ScrollButton aria-label="Scroll down"><Ic s={16} h={8}><path d="M0 0l8 8 8-8z" fill="#3c4a72" /></Ic></ScrollButton>
          </ScrollBar>
        </Pane>
      </MessageArea>

      <PeoplePane>
        <Splitter />
        <PeopleRow>
          <UpdateNote><InfoIcon />Update available for: Facebook.</UpdateNote>
          <Avatars><Avatar /><Avatar /></Avatars>
          <button aria-label="Expand people pane"><Ic s={8}><path d="M1 6l3-3 3 3" stroke="#222" strokeWidth="2" /></Ic></button>
        </PeopleRow>
      </PeoplePane>

      <Taskbar>
        <TaskArt viewBox="0 0 1920 56" preserveAspectRatio="none" aria-hidden="true">
          <defs>
            <linearGradient id="wall" x2="1" y2="0">
              <stop stopColor="#175688" /><stop offset=".06" stopColor="#1f6ea8" /><stop offset=".12" stopColor="#2c86bd" /><stop offset=".21" stopColor="#66b4df" />
              <stop offset=".3" stopColor="#48a3d6" /><stop offset=".42" stopColor="#3d95d0" /><stop offset=".55" stopColor="#2b80c4" />
              <stop offset=".65" stopColor="#2273b8" /><stop offset=".73" stopColor="#1f6cb0" /><stop offset=".81" stopColor="#1c5fa8" />
              <stop offset=".845" stopColor="#1d4d86" /><stop offset=".95" stopColor="#1c4678" /><stop offset="1" stopColor="#173c68" />
            </linearGradient>
            <filter id="blurry" x="-20%" y="-50%" width="140%" height="200%"><feGaussianBlur stdDeviation="3" /></filter>
          </defs>
          <path d="M0 0h1920v56H0z" fill="url(#wall)" />
          <g filter="url(#blurry)" fill="none">
            <path d="M0 60L110 0M130 60L200 0" stroke="#5ba9d6" strokeWidth="10" opacity=".4" />
            <path d="M400 30c80-18 140-10 220-2 120 14 240 10 490-32" stroke="#8ccbf0" strokeWidth="8" opacity=".3" />
            <path d="M690 60L900 0" stroke="#8ccbf0" strokeWidth="8" opacity=".4" />
            <path d="M610 0h20l40 56h-30z" fill="#2282b8" opacity=".6" />
            <path d="M950 0h70l40 56h-80zM1210 0h60l90 56h-120z" fill="#4b97d6" opacity=".5" />
          </g>
          <path d="M1275 -4Q1340 20 1378 60" stroke="#a9d3fa" strokeWidth="10" fill="none" filter="url(#blurry)" />
        </TaskArt>
        <Pinned>
          <TaskButton $width={52} aria-label="Start">
            <svg width="52" height="52" viewBox="0 0 52 52" aria-hidden="true">
              <defs>
                <radialGradient id="orb" cx=".5" cy=".95" r=".9"><stop stopColor="#25d5ff" /><stop offset=".4" stopColor="#0b6ca6" /><stop offset=".75" stopColor="#0a3560" /><stop offset="1" stopColor="#7f9fb8" /></radialGradient>
              </defs>
              <circle cx="26" cy="26" r="25" fill="url(#orb)" stroke="#a5c9df" />
              <path d="M4 22C8-2 44-2 48 22c-12 5-30 5-44 0z" fill="#fff" opacity=".35" />
              <path d="M16 11c4-3 7-2 11 0l-3 12c-4-2-7-2-11 0z" fill="#ee5a24" />
              <path d="M29 12c4 2 8 2 12-1l-3 12c-4 3-8 3-12 1z" fill="#8cc63e" />
              <path d="M12 26c4-2 7-2 11 0l-3 12c-4-2-7-2-11 0z" fill="#6cc5f5" />
              <path d="M25 27c4 2 8 2 12-1l-3 12c-4 3-8 3-12 1z" fill="#fdc92b" />
            </svg>
          </TaskButton>
          <TaskButton $width={81} aria-label="Windows Explorer">
            <svg width="48" height="46" viewBox="0 0 48 46" aria-hidden="true">
              <path d="M5 1h16l3 4h20v10H3z" fill="#f3e2a0" stroke="#bf9e45" />
              <path d="M7 3h8v4H7z" fill="#58a55c" /><path d="M17 5h12v5H17z" fill="#fff" /><path d="M18 6h4v3h-4z" fill="#d84a32" />
              <path d="M1 11h24l3-4h18v36H1z" fill="#f6e08c" stroke="#c9a64a" />
              <path d="M30 8h13v4H30z" fill="#fff" /><path d="M31 9h4v3h-4z" fill="#3d8fd0" />
              <path d="M8 44V32c0-3 1-4 4-4h25c3 0 4 1 4 4v12h-7v-7H15v7z" fill="#a8dcf4" stroke="#62aed6" opacity=".95" />
            </svg>
          </TaskButton>
        </Pinned>
        <TaskStack>
          <TaskButton $open $width={75} aria-label="Chrome">
            <svg width="44" height="44" viewBox="0 0 44 44" aria-hidden="true">
              <circle cx="22" cy="22" r="21" fill="#fbce12" />
              <path d="M22 22L3.800 11.500A21 21 0 0140.200 11.500z" fill="#db3b2b" />
              <path d="M40.200 11.500H22v10z" fill="#db3b2b" />
              <path d="M3.800 11.500A21 21 0 0021 43l9-16.500-8-4.500z" fill="#3fa648" />
              <circle cx="22" cy="22" r="9.500" fill="#fff" />
              <circle cx="22" cy="22" r="7.500" fill="#2f6ec4" />
            </svg>
          </TaskButton>
        </TaskStack>
        <TaskStack>
          <TaskButton $open $active $width={68} aria-label="Outlook">
            <svg width="46" height="46" viewBox="0 0 46 46" aria-hidden="true">
              <path d="M7 1h37v43H1V9z" fill="#fbd978" stroke="#e3a32a" strokeWidth="1.500" />
              <path d="M2 44V32l12-4 8-6 22 10v12z" fill="#fff4d8" />
              <path d="M16 34l18-8 8 4-22 12z" fill="#fff" stroke="#f0a030" />
              <ellipse cx="17" cy="19" rx="8.500" ry="11" fill="#fff3d0" stroke="#f08d1d" strokeWidth="6" />
              <circle cx="37" cy="21" r="7.500" fill="#fff" stroke="#f0a030" strokeWidth="1.500" />
              <path d="M37 16v5h5" stroke="#e68a18" strokeWidth="2" fill="none" />
            </svg>
          </TaskButton>
          <StackEdge />
          <StackEdge />
        </TaskStack>
        <TaskStack>
          <TaskButton $open $width={76} aria-label="Sage">
            <svg width="48" height="48" viewBox="0 0 48 48" aria-hidden="true">
              <path d="M0 0h48v48H0z" fill="#fff" />
              <path d="M1 1h46v7H1z" fill="#9a9a00" />
              <path d="M1 8h46v27H1z" fill="#005c50" />
              <path d="M1 39h46v8H1z" fill="#990099" />
              <text x="24" y="28" textAnchor="middle" fontFamily="Lato, sans-serif" fontWeight="700" fontSize="22" fill="#fff">sage</text>
            </svg>
          </TaskButton>
        </TaskStack>
        <Tray>
          <TrayIcons>
            <Ic s={12} h={8}><path d="M0 7l6-6 6 6z" fill="#fff" /></Ic>
            <span />
            <svg width="24" height="24" viewBox="0 0 24 24" aria-hidden="true"><circle cx="12" cy="12" r="11" fill="#3ed12b" stroke="#a8e89c" /><ellipse cx="12" cy="7" rx="7" ry="4" fill="#fff" opacity=".4" /></svg>
            <Ic s={24}><path d="M2.500 1v22" stroke="#fff" strokeWidth="2" /><path d="M4 2c6-2 7 3 10 4 3 1 5 0 8-1-1 3-2 6-3 9-3 1-6 1-8-1s-4-1-7 0z" fill="#fff" /></Ic>
            <Ic s={24}><path d="M5.500 4.500h17v13h-17z" fill="#35536f" stroke="#fff" strokeWidth="2" /><path d="M12 18v3M7 22h13" stroke="#fff" strokeWidth="2" /><path d="M1.500 2.500h4v6h-4zM3.500 9v14" fill="#35536f" stroke="#fff" strokeWidth="1.500" /></Ic>
            <Ic s={24}><path d="M1 8h3v9H1zM5 8l6-7v23l-6-7z" fill="#fff" /><circle cx="17" cy="17" r="6" fill="#e02020" /><path d="M15 15l4 4m0-4l-4 4" stroke="#fff" strokeWidth="1.800" /></Ic>
          </TrayIcons>
          <Clock>11:31<br />24/02/2015</Clock>
          <ShowDesktop aria-label="Show desktop" />
        </Tray>
      </Taskbar>
    </Window>
  );
}
